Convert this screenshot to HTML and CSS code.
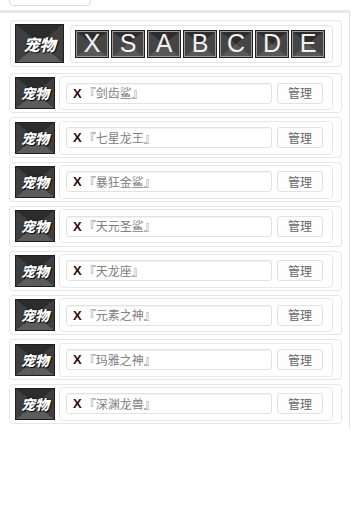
FILE: index.html
```html
<!DOCTYPE html>
<html lang="zh">
<head>
<meta charset="utf-8">
<link rel="stylesheet" href="styles.css">
</head>
<body>
<div class="top-tab"></div>
<div class="panel">
  <div class="card head-card">
    <div class="badge badge-lg">宠物</div>
    <div class="tiles">
      <span class="tile">X</span><span class="tile">S</span><span class="tile">A</span><span class="tile">B</span><span class="tile">C</span><span class="tile">D</span><span class="tile">E</span>
    </div>
  </div>
  <div class="list">
    <div class="card row"><div class="badge">宠物</div><div class="field"><div class="input"><b class="x">X</b><span class="name">『剑齿鲨』</span></div><span class="btn">管理</span></div></div>
    <div class="card row"><div class="badge">宠物</div><div class="field"><div class="input"><b class="x">X</b><span class="name">『七星龙王』</span></div><span class="btn">管理</span></div></div>
    <div class="card row"><div class="badge">宠物</div><div class="field"><div class="input"><b class="x">X</b><span class="name">『暴狂金鲨』</span></div><span class="btn">管理</span></div></div>
    <div class="card row"><div class="badge">宠物</div><div class="field"><div class="input"><b class="x">X</b><span class="name">『天元圣鲨』</span></div><span class="btn">管理</span></div></div>
    <div class="card row"><div class="badge">宠物</div><div class="field"><div class="input"><b class="x">X</b><span class="name">『天龙座』</span></div><span class="btn">管理</span></div></div>
    <div class="card row"><div class="badge">宠物</div><div class="field"><div class="input"><b class="x">X</b><span class="name">『元素之神』</span></div><span class="btn">管理</span></div></div>
    <div class="card row"><div class="badge">宠物</div><div class="field"><div class="input"><b class="x">X</b><span class="name">『玛雅之神』</span></div><span class="btn">管理</span></div></div>
    <div class="card row"><div class="badge">宠物</div><div class="field"><div class="input"><b class="x">X</b><span class="name">『深渊龙兽』</span></div><span class="btn">管理</span></div></div>
  </div>
</div>
</body>
</html>
```

FILE: styles.css
```css
* { box-sizing: border-box; }
html, body { margin: 0; padding: 0; background: #fff; }
body {
  width: 354px;
  font-family: "Noto Sans CJK SC", "Liberation Sans", sans-serif;
}
.top-tab {
  margin-left: 9px;
  width: 82px;
  height: 6px;
  border: 1px solid #dcdcdc;
  border-top: none;
  border-radius: 0 0 5px 5px;
}
.panel {
  margin-top: 4px;
  width: 350px;
  height: 418px;
  border-top: 3px solid #e8e8e8;
  border-right: 1px solid #e4e4e4;
  padding: 7px 0 0 9px;
}
.card {
  width: 333px;
  border: 1px solid #e6e6e6;
  border-radius: 4px;
  background: #fff;
}
.head-card {
  margin-left: 1px;
  width: 332px;
  height: 47px;
  display: flex;
  align-items: center;
  padding: 0 8px 0 4px;
}
.badge {
  flex: none;
  width: 40px;
  height: 32px;
  display: flex;
  align-items: center;
  justify-content: center;
  color: #fff;
  font-weight: 900;
  font-style: italic;
  font-size: 14px;
  border: 1px solid #1e1e1e;
  background: conic-gradient(from -51deg, #2c2c2c 0deg 102deg, #3f3f3f 102deg 180deg, #5c5c5c 180deg 282deg, #3f3f3f 282deg 360deg);
  text-shadow: 0 0 2px #000, 1px 1px 0 #111;
}
.badge-lg {
  width: 49px;
  height: 39px;
  font-size: 16px;
}
.tiles {
  margin-left: 6px;
  flex: 1;
  height: 38px;
  border: 1px solid #e4e4e4;
  border-radius: 4px;
  display: flex;
  align-items: center;
  gap: 2px;
  padding-left: 4px;
}
.tile {
  width: 34px;
  height: 28px;
  display: flex;
  align-items: center;
  justify-content: center;
  font-family: "Liberation Sans", Arial, sans-serif;
  font-size: 25px;
  color: #f0f0f0;
  border: 1px solid #1f1f1f;
  outline: 1px solid #9a9a9a;
  outline-offset: -2px;
  background: conic-gradient(from -51deg, #2c2c2c 0deg 102deg, #454545 102deg 180deg, #585858 180deg 282deg, #454545 282deg 360deg);
}
.list {
  margin-top: 6px;
  display: flex;
  flex-direction: column;
  gap: 4px;
}
.row {
  height: 40.4px;
  display: flex;
  align-items: center;
  padding: 0 8px 0 5px;
}
.field {
  margin-left: 4px;
  flex: 1;
  height: 34px;
  border: 1px solid #e8e8e8;
  border-radius: 4px;
  display: flex;
  align-items: center;
  padding: 0 9px 0 6px;
  gap: 5px;
}
.input {
  flex: 1;
  height: 21px;
  border: 1px solid #e2e2e2;
  border-radius: 3px;
  box-shadow: inset 0 1px 1px rgba(0,0,0,0.05);
  display: flex;
  align-items: center;
  padding-left: 6px;
  font-size: 12px;
  line-height: 1;
}
.x {
  font-family: "Liberation Sans", Arial, sans-serif;
  font-weight: 700;
  font-size: 13px;
  color: #2a0e0e;
  margin-right: 2px;
}
.name {
  color: #808080;
  font-size: 12px;
}
.btn {
  flex: none;
  width: 46px;
  height: 21px;
  border: 1px solid #e2e2e2;
  border-radius: 3px;
  background: #fdfdfd;
  display: flex;
  align-items: center;
  justify-content: center;
  font-size: 12px;
  color: #666;
  line-height: 1;
}
```
